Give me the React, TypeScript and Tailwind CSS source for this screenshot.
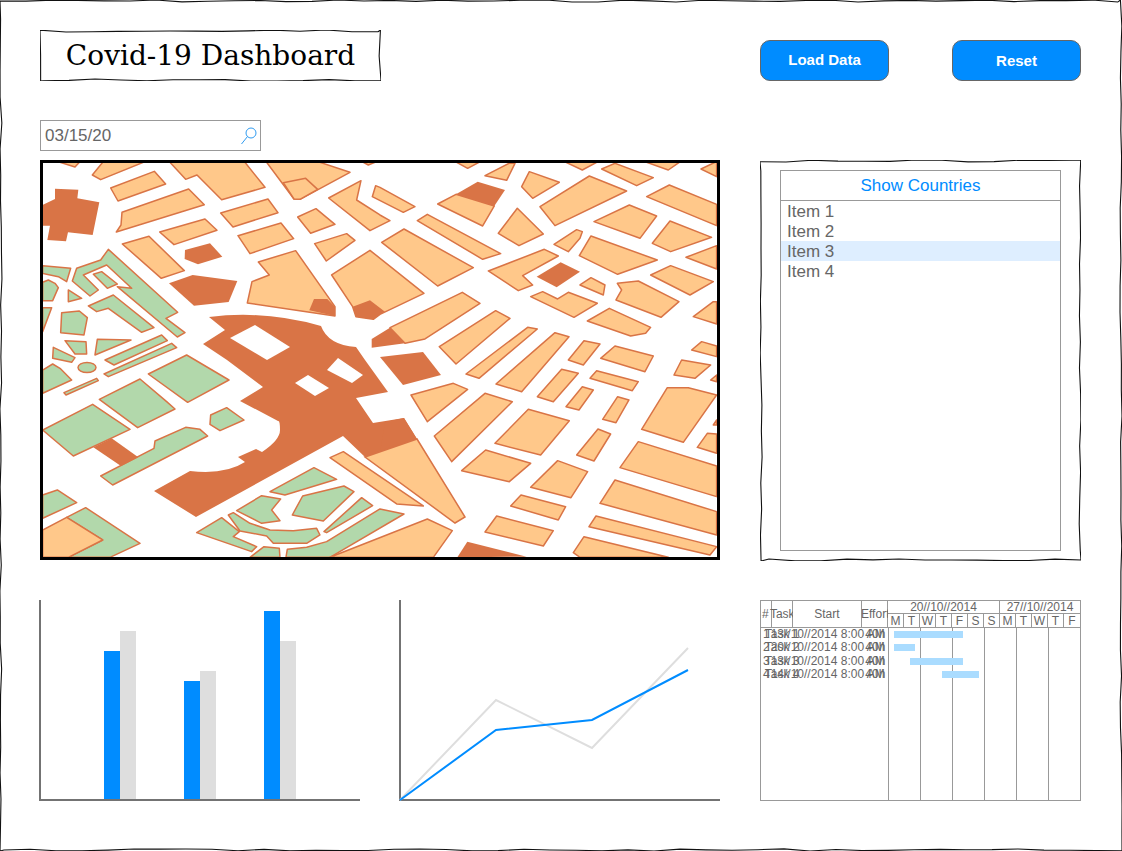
// Covid-19 dashboard wireframe
const P = "#ffc88a";
const D = "#d97446";
const G = "#b2d8ab";

// polygons are kept in the coordinates of four map tiles, each tile at 3x
const tileA = {
  peach: [
    "60,22 105,36 118,22",
    "188,22 157,60 182,74 310,22",
    "212,99 343,49 377,87 234,138",
    "229,231 243,210 246,172 446,102 493,149",
    "359,231 495,192 531,226 402,269",
    "247,267 327,244 433,347 364,370",
    "390,22 437,73 471,60 545,134 675,97 615,22",
    "680,22 762,132 780,133 930,52 840,22",
    "730,83 797,70 833,103 780,133 762,132",
    "542,174 684,132 714,173 579,216",
    "773,186 828,161 885,208 812,235",
    "594,242 723,204 761,251 630,296",
    "824,266 920,236 945,256 859,318",
    "655,321 767,287 885,455 885,483 622,444 636,380 688,360",
    "866,129 963,77 950,135 1020,180 1050,197 990,227",
    "875,360 990,286 1152,415 1020,478 1000,493 948,485 938,455",
    "970,22 985,30 1005,22",
    "997,125 1007,92 1020,97 1125,155 1090,172",
  ],
  dark: [
    "8,150 45,132 45,101 115,104 112,130 178,142 158,240 84,232 78,259 22,255 30,212 8,212",
    "435,285 510,265 547,305 474,328 434,312",
    "387,385 458,360 592,378 566,441 462,452",
    "808,466 822,432 862,432 885,455 885,483",
    "938,455 990,436 1035,470 1020,478 1000,493 948,485",
  ],
  green: [
    "8,332 92,340 80,380 55,365 8,355",
    "8,382 25,375 45,385 55,398 38,437 8,437",
    "8,458 35,458 8,530",
    "85,405 125,430 85,440",
    "65,473 118,468 142,488 132,540 62,533",
    "75,557 138,560 140,597 105,597",
    "172,553 273,555 165,600",
    "40,577 105,608 95,622 38,610",
    "205,283 413,472 378,490 435,533 412,546 232,395 275,400 200,330 130,360 175,405 150,423 97,378 110,340 182,315",
    "160,358 185,350 232,387 202,400",
    "145,453 220,420 342,518 305,532 205,460 170,470",
    "195,615 365,540 382,557 222,630",
    "192,657 395,565 410,578 205,665",
  ],
};

const tileB = {
  peach: [
    "230,22 263,40 297,22",
    "315,62 387,25 405,25 380,76",
    "425,95 448,50 538,82 458,130",
    "480,155 628,63 740,108 525,212",
    "355,235 412,160 490,237 417,272",
    "558,22 607,45 650,22",
    "665,42 705,25 820,68 770,92",
    "800,22 865,45 898,22",
    "800,125 868,90 1010,148 1010,212",
    "963,42 1005,22 1010,22 1010,65",
    "642,200 748,150 830,183 780,250",
    "817,265 870,198 995,247 872,290",
    "918,307 1010,272 1010,342",
    "112,197 142,178 362,296 308,313",
    "5,262 72,222 280,338 173,393",
    "522,268 590,224 607,230 600,250 565,290",
    "598,302 633,243 832,315 713,358",
    "325,348 493,283 535,303 428,362 458,390 415,407",
    "812,360 872,332 1000,380 930,420",
    "600,390 633,368 675,390 670,420",
    "712,385 775,378 897,440 843,487 708,435 725,405",
    "452,425 488,410 533,432 565,412 652,445 582,487",
    "622,498 688,460 812,517 797,535 752,543",
    "940,485 1000,440 1010,440 1010,507",
    "935,585 965,560 1010,573 1010,605",
    "30,518 247,412 300,445 135,552 75,565",
    "178,575 347,467 390,490 228,627",
    "258,657 443,517 472,522 297,670",
    "173,147 228,118 343,153 308,213",
  ],
  dark: [
    "228,118 293,80 375,105 343,153",
    "470,365 542,322 600,350 530,397",
    "30,518 75,565 -25,578 -25,552",
  ],
};

const tileC = {
  dark: ["160,262 215,235 295,292 243,318"],
  green: [
    "8,30 38,12 60,25 95,60 8,100",
    "72,98 170,55 175,62 78,105",
    "325,42 440,-15 567,60 443,127",
    "178,118 300,57 380,125 405,147 293,203",
    "8,210 158,133 270,208 100,288",
    "512,165 560,143 612,180 540,212 510,193",
    "182,348 342,265 345,243 437,202 480,208 503,228 218,375",
    "8,405 52,390 110,428 8,475",
    "80,472 137,443 300,550 210,592 85,592 188,540",
    "690,395 822,323 890,358 735,405",
    "590,452 665,407 722,417 695,450 720,482 665,490",
    "757,465 788,408 912,378 942,395 850,483",
    "852,515 965,413 998,437 860,518",
    "470,518 545,473 598,515 580,530 650,560 635,575",
    "565,465 580,458 630,490 690,510 760,512 830,505 840,525 800,550 700,550 680,528 600,513",
    "630,592 672,560 718,565 720,592",
    "738,592 742,568 800,562 860,545 1020,447 1092,462 870,592",
  ],
  peach: ["8,510 80,472 188,540 85,592 8,592"],
};

const tileD = {
  peach: [
    "630,55 650,32 775,65 757,92",
    "882,45 905,0 992,15 945,55",
    "992,60 1010,45 1010,65",
    "472,110 545,28 595,40 520,125",
    "558,140 607,80 640,90 597,150",
    "668,178 713,110 747,120 708,188",
    "785,208 862,83 925,83 1010,105 910,247",
    "1000,195 1010,180 1010,195",
    "952,262 982,220 1010,222 1010,280",
    "590,285 654,207 692,222 642,303",
    "720,323 775,245 1010,318 1010,410",
    "345,250 445,148 568,182 482,285",
    "163,228 315,100 397,125 215,305",
    "93,105 220,70 263,88 142,185",
    "245,332 317,270 452,310 388,365",
    "452,382 533,302 623,335 573,413",
    "392,438 423,405 557,440 535,480",
    "315,516 350,468 520,512 490,558",
    "660,430 705,360 1010,455 1010,525",
    "627,500 648,468 1010,560 990,585",
    "580,578 612,530 865,592 600,592",
    "-150,293 -110,275 130,438 50,432",
    "-150,592 142,477 217,512 160,592",
    "565,0 612,-58 660,-48 610,15",
    "662,-5 705,-42 820,-12 795,35",
    "348,72 525,-82 567,-70 425,95",
  ],
  dark: ["232,592 262,545 440,590"],
};

const Tile = ({ x, y, data }: { x: number; y: number; data: { peach?: string[]; dark?: string[]; green?: string[] } }) => (
  <g transform={`translate(${x} ${y}) scale(0.3333)`} strokeWidth="4.5" strokeLinejoin="round">
    {data.green?.map((p) => <polygon key={p} points={p} fill={G} stroke={D} />)}
    {data.peach?.map((p) => <polygon key={p} points={p} fill={P} stroke={D} />)}
    {data.dark?.map((p) => <polygon key={p} points={p} fill={D} />)}
  </g>
);

const CityMap = () => (
  <svg viewBox="43 163 674 394" className="block w-full h-full">
    <rect x="40" y="160" width="680" height="400" fill="#fff" />
    {/* square in the middle of the map */}
    <path
      d="M209 317 Q265 310 321 326 Q328 345 356 347 L365 360 L388 392 L356 398 L373 423 L404 418 L417 439 L365 457 L343 436 L196 517 L154 491 L190 471 Q225 475 245 462 L238 457 L256 449 L262 452 Q280 440 280 430 Q280 420 278 421 L240 401 L263 387 L227 360 L203 344 L225 330 Z"
      fill={D}
    />
    <polygon points="230,338 255,325 290,347 267,360" fill="#fff" />
    <polygon points="295,383 308,375 329,388 315,396" fill="#fff" />
    <polygon points="327,370 338,358 363,375 352,383" fill="#fff" />
    <polygon points="385,422 404,418 417,439 380,452" fill={D} />
    <polygon points="380,357 423,352 441,375 403,385" fill={D} />
    <Tile x={40} y={155} data={tileA} />
    <Tile x={380} y={155} data={tileB} />
    <Tile x={40} y={360} data={tileC} />
    <Tile x={380} y={360} data={tileD} />
    <ellipse cx="87" cy="367.5" rx="9" ry="5" fill={G} stroke={D} strokeWidth="1.5" />
    <path d="M365 457 L417 439 L465 517 L455 523 Z" fill={P} stroke={D} strokeWidth="1.5" />
  </svg>
);

// hand drawn outline, same wobble every render
const wobble = (w: number, h: number, seed: number) => {
  const pts: string[] = [];
  let s = seed;
  const j = () => {
    s = (s * 9301 + 49297) % 233280;
    return (s / 233280 - 0.5) * 2.2;
  };
  const step = 26;
  for (let x = 0; x < w; x += step) pts.push(`${x},${1 + j()}`);
  for (let y = 0; y < h; y += step) pts.push(`${w - 1 + j()},${y}`);
  for (let x = w; x > 0; x -= step) pts.push(`${x},${h - 1 + j()}`);
  for (let y = h; y > 0; y -= step) pts.push(`${1 + j()},${y}`);
  return pts.join(" ");
};

const SketchBorder = ({ w, h, seed }: { w: number; h: number; seed: number }) => (
  <svg className="absolute inset-0 pointer-events-none" width={w} height={h} viewBox={`0 0 ${w} ${h}`}>
    <polygon points={wobble(w, h, seed)} fill="none" stroke="#111" strokeWidth="1.1" strokeLinejoin="round" />
  </svg>
);

const days = ["M", "T", "W", "T", "F", "S", "S", "M", "T", "W", "T", "F"];

const tasks = [
  { id: 1, name: "Task 1", start: "13//10//2014 8:00 AM", bar: "ml-[5px] w-[69px]" },
  { id: 2, name: "Task 2", start: "20//10//2014 8:00 AM", bar: "ml-[5px] w-[21px]" },
  { id: 3, name: "Task 3", start: "13//10//2014 8:00 AM", bar: "ml-[21px] w-[53px]" },
  { id: 4, name: "Task 4", start: "14//10//2014 8:00 AM", bar: "ml-[53px] w-[37px]" },
];

const Gantt = () => (
  <div className="relative w-[321px] h-[201px] border border-[#999] text-[12px] leading-[13px] text-[#666] flex flex-col">
    <div className="flex h-[27px] border-b border-[#999] shrink-0">
      <div className="w-[11px] border-r border-[#999] flex items-center pl-[1px]">#</div>
      <div className="w-[21px] border-r border-[#999] flex items-center [clip-path:inset(0_0_0_-4px)]">
        <span className="-ml-[2px]">Task</span>
      </div>
      <div className="w-[70px] border-r border-[#999] flex items-center justify-center">Start</div>
      <div className="w-[26px] border-r border-[#999] flex items-center [clip-path:inset(0_0_0_-4px)]">
        <span className="-ml-[1px]">Effort</span>
      </div>
      <div className="flex-1 flex flex-col">
        <div className="flex h-[13px] border-b border-[#999]">
          <div className="w-[112px] border-r border-[#999] text-center">20//10//2014</div>
          <div className="flex-1 text-center">27//10//2014</div>
        </div>
        <div className="flex flex-1">
          {days.map((d, i) => (
            <div key={i} className="w-[16px] border-r border-[#999] last:border-r-0 text-center leading-[14px]">{d}</div>
          ))}
        </div>
      </div>
    </div>
    <div className="relative flex flex-1">
      <div className="w-[128px] border-r border-[#999]">
        {tasks.map((t) => (
          <div key={t.id} className="relative h-[13.33px] flex whitespace-nowrap">
            <div className="w-[11px] flex justify-center">{t.id}</div>
            <div className="w-[21px] flex justify-center">{t.name}</div>
            <div className="w-[70px] flex justify-center">{t.start}</div>
            <div className="w-[26px] flex justify-center">40h</div>
          </div>
        ))}
      </div>
      <div className="flex-1 relative flex">
        {[0, 1, 2, 3, 4, 5].map((n) => (
          <div key={n} className="w-[32px] border-r border-[#999] last:border-r-0" />
        ))}
        <div className="absolute inset-0 pt-[3px]">
          {tasks.map((t) => (
            <div key={t.id} className="h-[13.33px]">
              <div className={`h-[7px] bg-[#aadcff] ${t.bar}`} />
            </div>
          ))}
        </div>
      </div>
    </div>
  </div>
);

const BarChart = () => (
  <div className="w-[321px] h-[201px] border-l-2 border-b-2 border-[#737373] flex items-end pl-[63px] gap-[48px]">
    <div className="flex items-end">
      <div className="w-[16px] h-[148px] bg-[#008cff]" />
      <div className="w-[16px] h-[168px] bg-[#dedede]" />
    </div>
    <div className="flex items-end">
      <div className="w-[16px] h-[118px] bg-[#008cff]" />
      <div className="w-[16px] h-[128px] bg-[#dedede]" />
    </div>
    <div className="flex items-end">
      <div className="w-[16px] h-[188px] bg-[#008cff]" />
      <div className="w-[16px] h-[158px] bg-[#dedede]" />
    </div>
  </div>
);

const LineChart = () => (
  <div className="w-[321px] h-[201px] border-l-2 border-b-2 border-[#737373]">
    <svg viewBox="0 0 319 199" className="block w-full h-full overflow-visible">
      <polyline points="-1,200 95,100 191,148 287,48" fill="none" stroke="#dedede" strokeWidth="2" />
      <polyline points="-1,200 95,130 191,120 287,70" fill="none" stroke="#008cff" strokeWidth="2" />
    </svg>
  </div>
);

export default function App() {
  return (
    <div
      className="relative w-[1122px] h-[851px] bg-white overflow-hidden pt-[30px] pl-[40px]"
      style={{ fontFamily: '"Liberation Sans", Arial, sans-serif' }}
    >
      <SketchBorder w={1122} h={851} seed={7} />
      <div className="grid grid-cols-[680px_321px] gap-x-[40px]">
        <div className="h-[130px] flex flex-col justify-between">
          <div
            className="relative w-[341px] h-[51px] flex items-center justify-center text-black"
            style={{ fontFamily: '"DejaVu Serif", serif' }}
          >
            <SketchBorder w={341} h={51} seed={23} />
            <span className="text-[28px]">Covid-19 Dashboard</span>
          </div>
          <div className="relative w-[221px] h-[31px] border border-[#999] flex items-center pl-[4px] text-[17px] text-[#666] mb-[9px]">
            03/15/20
            <svg className="absolute right-[2px] top-[5px]" width="18" height="20" viewBox="0 0 18 20" fill="none" stroke="#2f9bf0" strokeWidth="1">
              <circle cx="11" cy="7" r="5" />
              <path d="M7.5 10.5 L1.5 18" />
            </svg>
          </div>
        </div>
        <div className="flex justify-between pt-[10px]">
          <button className="w-[129px] h-[41px] rounded-[10px] bg-[#008cff] border border-[#666] text-white font-bold text-[15px] pb-[1px]">
            Load Data
          </button>
          <button className="w-[129px] h-[41px] rounded-[10px] bg-[#008cff] border border-[#666] text-white font-bold text-[15px] pt-[1px]">
            Reset
          </button>
        </div>

        <div className="w-[680px] h-[400px] border-[3px] border-black bg-white">
          <CityMap />
        </div>
        <div className="relative h-[401px] px-[20px] py-[10px]">
          <SketchBorder w={321} h={401} seed={41} />
          <div className="h-[381px] border border-[#999] flex flex-col">
            <div className="h-[30px] border-b border-[#999] flex items-center justify-center text-[17px] text-[#008cff] pt-[1px] shrink-0">
              Show Countries
            </div>
            <ul className="text-[17px] leading-[20px] text-[#666]">
              <li className="h-[20px] px-[6px] pt-[1px]">Item 1</li>
              <li className="h-[20px] px-[6px] pt-[1px]">Item 2</li>
              <li className="h-[20px] px-[6px] pt-[1px] bg-[#deeeff]">Item 3</li>
              <li className="h-[20px] px-[6px] pt-[1px]">Item 4</li>
            </ul>
          </div>
        </div>

        <div className="flex gap-[39px] mt-[39px] -ml-[1px]">
          <BarChart />
          <LineChart />
        </div>
        <div className="mt-[39px]">
          <Gantt />
        </div>
      </div>
    </div>
  );
}
